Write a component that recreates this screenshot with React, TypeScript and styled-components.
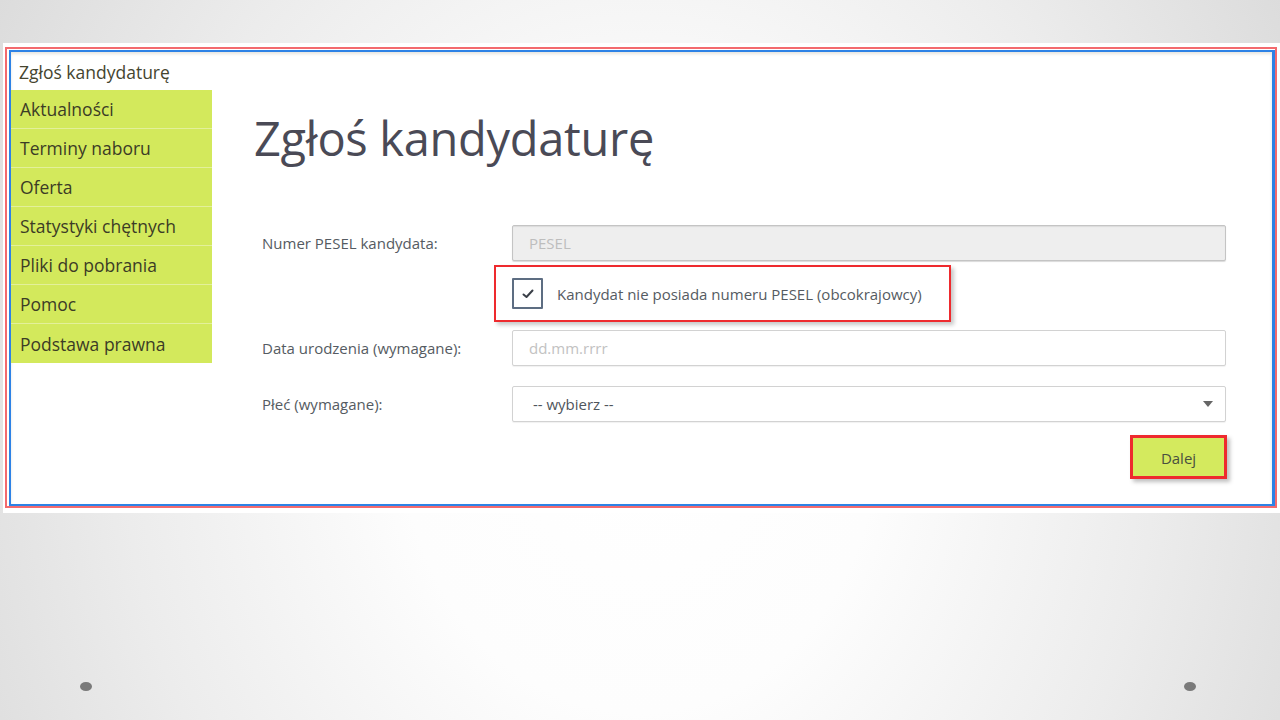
import React from "react";
import styled, { createGlobalStyle } from "styled-components";

const Global = createGlobalStyle`
  html, body { margin: 0; padding: 0; }
  body { width: 1280px; height: 720px; overflow: hidden; font-family: "Open Sans", "Noto Sans", sans-serif; }
  * { box-sizing: border-box; }
`;

const Slide = styled.div`
  width: 1280px;
  height: 720px;
  background: radial-gradient(ellipse 62% 130% at 50% 60%, #ffffff 0%, #fdfdfd 30%, #ececec 65%, #d8d8d8 100%);
  display: flex;
  flex-direction: column;
  padding-top: 43px;
  padding-left: 3px;
`;

const Shot = styled.div`
  width: 1277px;
  height: 470px;
  background: #ffffff;
  padding: 4px 4px 5px 2px;
  display: flex;
`;

const RedFrame = styled.div`
  flex: 1;
  border: 2px solid #f36a6e;
  display: flex;
`;

const BlueFrame = styled.div`
  flex: 1;
  margin: 1px 0 0 2px;
  border: 2px solid #2d82e6;
  border-right-width: 3px;
  display: flex;
  box-shadow: inset 0 2px 3px rgba(120, 110, 80, 0.18);
`;

const Sidebar = styled.nav`
  width: 201px;
  display: flex;
  flex-direction: column;
`;

const SideHeader = styled.div`
  height: 38px;
  display: flex;
  align-items: center;
  padding-left: 8px;
  padding-top: 2px;
  font-size: 17.5px;
  color: #45452f;
`;

const MenuItem = styled.div<{ $last?: boolean }>`
  height: 39px;
  background: #d3e95c;
  border-bottom: ${(p) => (p.$last ? "none" : "1px solid #e3f09a")};
  display: flex;
  align-items: center;
  padding-left: 9px;
  font-size: 17.5px;
  color: #3c3c26;
`;

const Main = styled.main`
  flex: 1;
  padding-left: 42px;
  padding-right: 45px;
  display: flex;
  flex-direction: column;
`;

const Title = styled.h1`
  margin: 55px 0 0 0;
  font-weight: 400;
  font-size: 47px;
  line-height: 62px;
  color: #4a4a56;
  letter-spacing: -0.3px;
`;

const Form = styled.div`
  margin-top: 56px;
  padding-left: 8px;
  display: flex;
  flex-direction: column;
`;

const Row = styled.div<{ $mt?: number }>`
  display: flex;
  align-items: center;
  margin-top: ${(p) => p.$mt ?? 0}px;
`;

const Label = styled.div`
  width: 250px;
  font-size: 15px;
  color: #555b62;
`;

const Field = styled.div<{ $disabled?: boolean }>`
  width: 714px;
  height: 36px;
  border: 1px solid ${(p) => (p.$disabled ? "#c4c4c4" : "#d2d2d2")};
  border-radius: 2px;
  background: ${(p) => (p.$disabled ? "#eeeeee" : "#ffffff")};
  display: flex;
  align-items: center;
  padding-left: 16px;
  padding-right: 12px;
  font-size: 15px;
  box-shadow: ${(p) => (p.$disabled ? "inset 0 1px 1px rgba(0,0,0,0.08), 0 1px 1px rgba(0,0,0,0.15)" : "0 1px 1px rgba(0,0,0,0.06)")};
`;

const Placeholder = styled.span<{ $tone?: string }>`
  flex: 1;
  color: ${(p) => p.$tone ?? "#c2c2c2"};
`;

const Highlight = styled.div`
  margin-left: 232px;
  width: 457px;
  height: 57px;
  border: 2px solid #ee2a2e;
  box-shadow: 3px 3px 4px rgba(0, 0, 0, 0.22);
  display: flex;
  align-items: center;
  padding-left: 16px;
  gap: 14px;
`;

const CheckBox = styled.div`
  width: 31px;
  height: 31px;
  border: 2px solid #5d6d82;
  border-radius: 1px;
  display: flex;
  align-items: center;
  justify-content: center;
`;

const CheckText = styled.span`
  font-size: 15px;
  color: #555b62;
`;

const ButtonRow = styled.div`
  display: flex;
  justify-content: flex-end;
  margin-top: 13px;
  width: 965px;
`;

const Button = styled.div`
  width: 97px;
  height: 44px;
  border: 3px solid #ee2a2e;
  background: #d4ea5e;
  box-shadow: 3px 3px 4px rgba(0, 0, 0, 0.25);
  display: flex;
  align-items: center;
  justify-content: center;
  font-size: 15px;
  color: #4a5040;
  padding-top: 1px;
`;

const Dots = styled.div`
  margin-top: auto;
  height: 38px;
  display: flex;
  justify-content: space-between;
  padding: 0 84px 0 77px;
`;

const Dot = styled.div`
  width: 12px;
  height: 9px;
  border-radius: 50%;
  background: #7a7a7a;
`;

const menu = [
  "Aktualności",
  "Terminy naboru",
  "Oferta",
  "Statystyki chętnych",
  "Pliki do pobrania",
  "Pomoc",
  "Podstawa prawna",
];

export default function App() {
  return (
    <>
      <Global />
      <Slide>
        <Shot>
          <RedFrame>
            <BlueFrame>
              <Sidebar>
                <SideHeader>Zgłoś kandydaturę</SideHeader>
                {menu.map((m, i) => (
                  <MenuItem key={m} $last={i === menu.length - 1}>
                    {m}
                  </MenuItem>
                ))}
              </Sidebar>
              <Main>
                <Title>Zgłoś kandydaturę</Title>
                <Form>
                  <Row>
                    <Label>Numer PESEL kandydata:</Label>
                    <Field $disabled>
                      <Placeholder $tone="#bdbdbd">PESEL</Placeholder>
                    </Field>
                  </Row>
                  <Row $mt={4}>
                    <Highlight>
                      <CheckBox>
                        <svg width="12" height="10" viewBox="0 0 12 10">
                          <polyline points="1.5,5.5 4.5,8 10.5,1.5" fill="none" stroke="#3a3f48" strokeWidth="2" strokeLinecap="round" strokeLinejoin="round" />
                        </svg>
                      </CheckBox>
                      <CheckText>Kandydat nie posiada numeru PESEL (obcokrajowcy)</CheckText>
                    </Highlight>
                  </Row>
                  <Row $mt={8}>
                    <Label>Data urodzenia (wymagane):</Label>
                    <Field>
                      <Placeholder>dd.mm.rrrr</Placeholder>
                    </Field>
                  </Row>
                  <Row $mt={20}>
                    <Label>Płeć (wymagane):</Label>
                    <Field>
                      <Placeholder $tone="#4f555c">&nbsp;-- wybierz --</Placeholder>
                      <svg width="10" height="6" viewBox="0 0 10 6">
                        <polygon points="0,0 10,0 5,6" fill="#666" />
                      </svg>
                    </Field>
                  </Row>
                  <ButtonRow>
                    <Button>Dalej</Button>
                  </ButtonRow>
                </Form>
              </Main>
            </BlueFrame>
          </RedFrame>
        </Shot>
        <Dots>
          <Dot />
          <Dot />
        </Dots>
      </Slide>
    </>
  );
}
